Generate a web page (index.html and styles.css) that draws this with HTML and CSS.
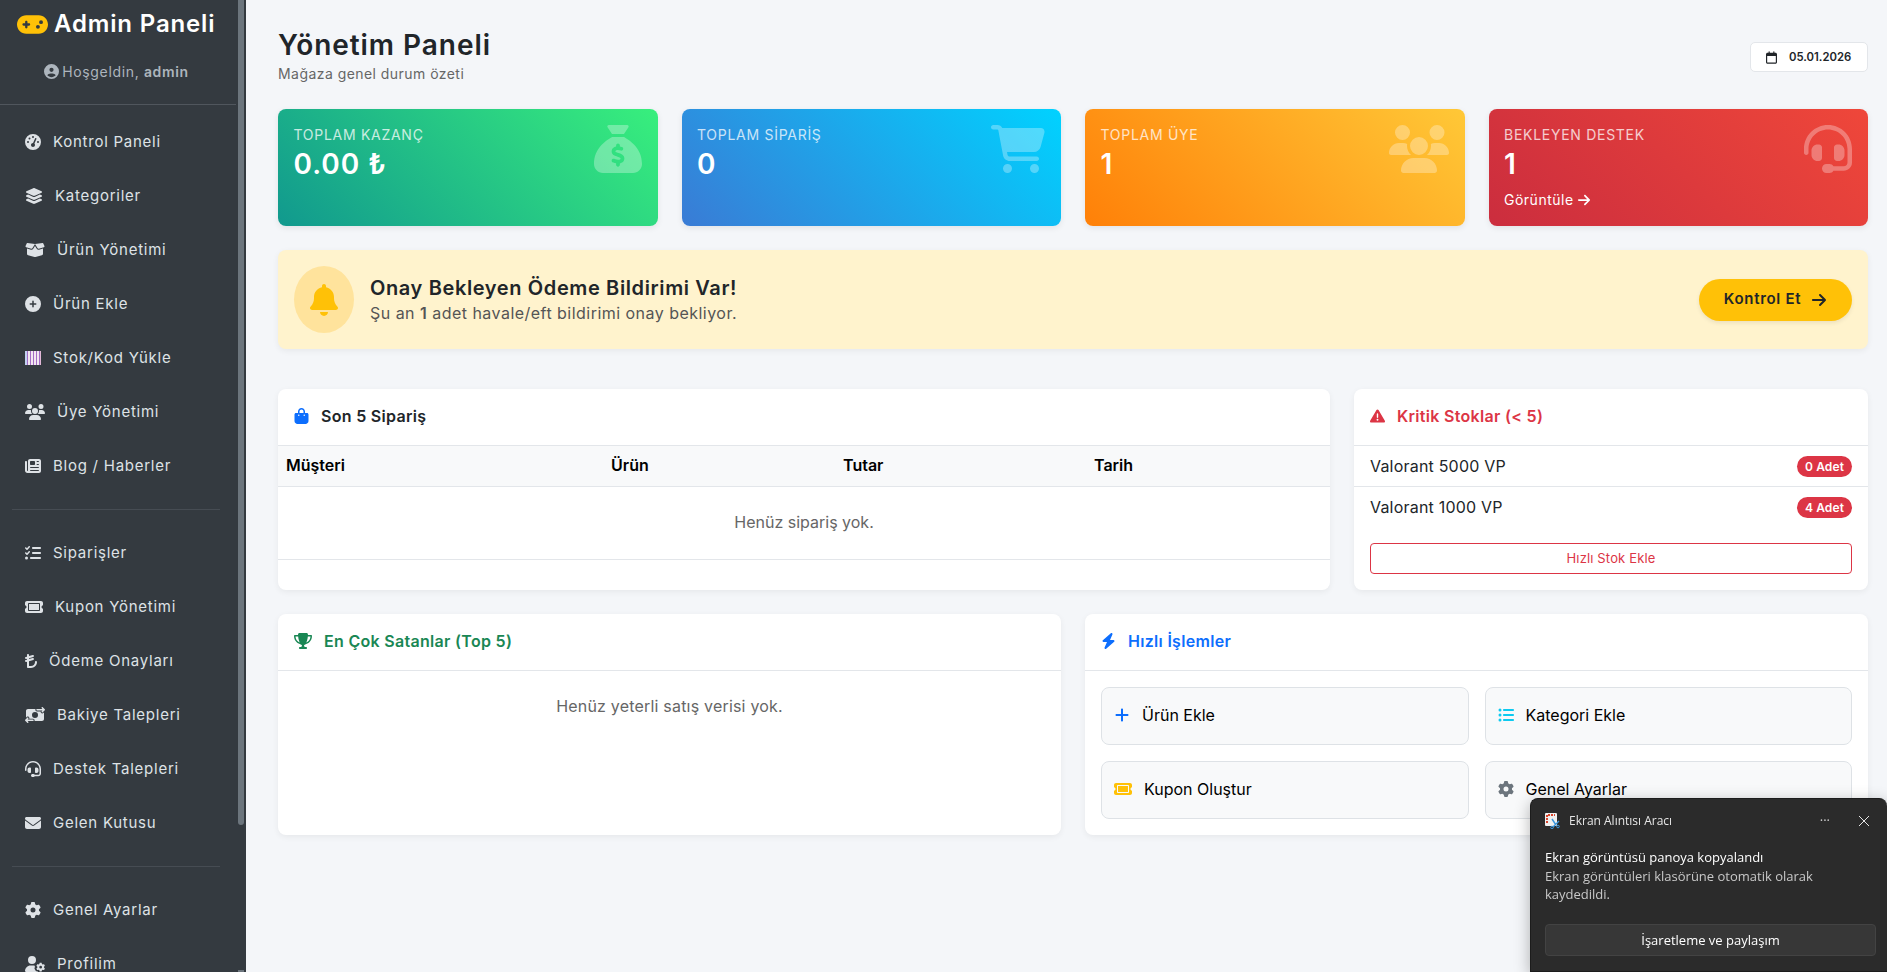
FILE: index.html
```html
<!DOCTYPE html>
<html lang="tr">
<head>
	<meta charset="UTF-8">
	<title>Yönetim Paneli</title>
	<link rel="stylesheet" href="styles.css">
</head>
<body>

	<!-- icons -->
	<svg class="sprite" xmlns="http://www.w3.org/2000/svg">
		<symbol id="i-gamepad" viewBox="0 0 640 512"><path d="M192 64C86 64 0 150 0 256S86 448 192 448H448c106 0 192-86 192-192s-86-192-192-192H192zM496 168a40 40 0 1 1 0 80 40 40 0 1 1 0-80zM392 304a40 40 0 1 1 80 0 40 40 0 1 1 -80 0zM168 200c0-13.3 10.7-24 24-24s24 10.7 24 24v32h32c13.3 0 24 10.7 24 24s-10.7 24-24 24H216v32c0 13.3-10.7 24-24 24s-24-10.7-24-24V280H136c-13.3 0-24-10.7-24-24s10.7-24 24-24h32V200z"/></symbol>
		<symbol id="i-user-circle" viewBox="0 0 512 512"><path d="M399 384.2C376.9 345.8 335.4 320 288 320H224c-47.4 0-88.9 25.8-111 64.2c35.2 39.2 86.2 63.8 143 63.8s107.8-24.7 143-63.8zM0 256a256 256 0 1 1 512 0A256 256 0 1 1 0 256zm256 16a72 72 0 1 0 0-144 72 72 0 1 0 0 144z"/></symbol>
		<symbol id="i-gauge" viewBox="0 0 512 512"><path d="M0 256a256 256 0 1 1 512 0A256 256 0 1 1 0 256zM288 96a32 32 0 1 0 -64 0 32 32 0 1 0 64 0zM256 416c35.3 0 64-28.7 64-64c0-17.4-6.9-33.1-18.1-44.6L366 161.7c5.3-12.1-.2-26.3-12.3-31.6s-26.3 .2-31.6 12.3L257.9 288c-.6 0-1.3 0-1.9 0c-35.3 0-64 28.7-64 64s28.7 64 64 64zM176 144a32 32 0 1 0 -64 0 32 32 0 1 0 64 0zM96 288a32 32 0 1 0 0-64 32 32 0 1 0 0 64zm352-32a32 32 0 1 0 -64 0 32 32 0 1 0 64 0z"/></symbol>
		<symbol id="i-layers" viewBox="0 0 576 512"><path d="M264.5 5.2c14.9-6.9 32.1-6.9 47 0l218.6 101c8.5 3.9 13.9 12.4 13.9 21.8s-5.4 17.9-13.9 21.8l-218.6 101c-14.9 6.9-32.1 6.9-47 0L45.9 149.8C37.4 145.8 32 137.3 32 128s5.4-17.9 13.9-21.8L264.5 5.2zM476.9 209.6l53.2 24.6c8.5 3.9 13.9 12.4 13.9 21.8s-5.4 17.9-13.9 21.8l-218.6 101c-14.9 6.9-32.1 6.9-47 0L45.9 277.8C37.4 273.8 32 265.3 32 256s5.4-17.9 13.9-21.8l53.2-24.6 152 70.2c23.4 10.8 50.4 10.8 73.8 0l152-70.2zm-152 198.2l152-70.2 53.2 24.6c8.5 3.9 13.9 12.4 13.9 21.8s-5.4 17.9-13.9 21.8l-218.6 101c-14.9 6.9-32.1 6.9-47 0L45.9 405.8C37.4 401.8 32 393.3 32 384s5.4-17.9 13.9-21.8l53.2-24.6 152 70.2c23.4 10.8 50.4 10.8 73.8 0z"/></symbol>
		<symbol id="i-box-open" viewBox="0 0 640 512"><path d="M58.9 42.1c3-6.1 9.6-9.6 16.3-8.7L320 64 564.8 33.4c6.7-.8 13.3 2.7 16.3 8.7l41.7 83.4c9 17.9-.6 39.6-19.8 45.1L439.6 217.3c-13.9 4-28.8-1.9-36.2-14.3L320 64 236.6 203c-7.4 12.4-22.3 18.3-36.2 14.3L37.1 170.6c-19.3-5.5-28.8-27.2-19.8-45.1L58.9 42.1zM321.1 128l54.9 91.4c14.9 24.8 44.6 36.6 72.5 28.6L576 211.6v167c0 22-15 41.2-36.4 46.6l-204.1 51c-10.2 2.6-20.9 2.6-31 0l-204.1-51C79 419.7 64 400.5 64 378.5v-167L191.6 248c27.8 8 57.6-3.8 72.5-28.6L318.9 128h2.2z"/></symbol>
		<symbol id="i-circle-plus" viewBox="0 0 512 512"><path d="M256 512A256 256 0 1 0 256 0a256 256 0 1 0 0 512zM232 344V280H168c-13.3 0-24-10.7-24-24s10.7-24 24-24h64V168c0-13.3 10.7-24 24-24s24 10.7 24 24v64h64c13.3 0 24 10.7 24 24s-10.7 24-24 24H280v64c0 13.3-10.7 24-24 24s-24-10.7-24-24z"/></symbol>
		<symbol id="i-barcode" viewBox="0 0 512 512"><rect x="0" y="32" width="512" height="448" fill="#a36cc4"/><rect x="0" y="32" width="64" height="448" fill="#c3d0f2"/><rect x="96" y="32" width="64" height="448" fill="#f2e6f0"/><rect x="192" y="32" width="64" height="448" fill="#f2e6f0"/><rect x="288" y="32" width="64" height="448" fill="#f2e6f0"/><rect x="384" y="32" width="64" height="448" fill="#f2e6f0"/><rect x="480" y="32" width="32" height="448" fill="#e2b8d8"/></symbol>
		<symbol id="i-users" viewBox="0 0 640 512"><path d="M144 0a80 80 0 1 1 0 160A80 80 0 1 1 144 0zM512 0a80 80 0 1 1 0 160A80 80 0 1 1 512 0zM0 298.7C0 239.8 47.8 192 106.7 192h42.7c15.9 0 31 3.5 44.6 9.7c-1.3 7.2-1.9 14.7-1.9 22.3c0 38.2 16.8 72.5 43.3 96c-.2 0-.4 0-.7 0H21.3C9.6 320 0 310.4 0 298.7zM405.3 320c-.2 0-.4 0-.7 0c26.6-23.5 43.3-57.8 43.3-96c0-7.6-.7-15-1.9-22.3c13.6-6.3 28.7-9.7 44.6-9.7h42.7C592.2 192 640 239.8 640 298.7c0 11.8-9.6 21.3-21.3 21.3H405.3zM224 224a96 96 0 1 1 192 0 96 96 0 1 1 -192 0zM128 485.3C128 411.7 187.7 352 261.3 352H378.7C452.3 352 512 411.7 512 485.3c0 14.7-11.9 26.7-26.7 26.7H154.7c-14.7 0-26.7-11.9-26.7-26.7z"/></symbol>
		<symbol id="i-newspaper" viewBox="0 0 512 512"><path d="M96 96c0-35.3 28.7-64 64-64H448c35.3 0 64 28.7 64 64V416c0 35.3-28.7 64-64 64H80c-44.2 0-80-35.8-80-80V128c0-17.7 14.3-32 32-32s32 14.3 32 32V400c0 8.8 7.2 16 16 16s16-7.2 16-16V96zm64 24v80c0 13.3 10.7 24 24 24H296c13.3 0 24-10.7 24-24V120c0-13.3-10.7-24-24-24H184c-13.3 0-24 10.7-24 24zm208-8c0 8.8 7.2 16 16 16h48c8.8 0 16-7.2 16-16s-7.2-16-16-16H384c-8.8 0-16 7.2-16 16zm0 96c0 8.8 7.2 16 16 16h48c8.8 0 16-7.2 16-16s-7.2-16-16-16H384c-8.8 0-16 7.2-16 16zM160 304c0 8.8 7.2 16 16 16H432c8.8 0 16-7.2 16-16s-7.2-16-16-16H176c-8.8 0-16 7.2-16 16zm0 96c0 8.8 7.2 16 16 16H432c8.8 0 16-7.2 16-16s-7.2-16-16-16H176c-8.8 0-16 7.2-16 16z"/></symbol>
		<symbol id="i-list-check" viewBox="0 0 512 512"><path d="M152.1 38.2c9.9 8.9 10.7 24 1.8 33.9l-72 80c-4.4 4.9-10.6 7.8-17.2 7.9s-12.9-2.4-17.6-7L7 113C-2.3 103.6-2.3 88.4 7 79s24.6-9.4 33.9 0l22.1 22.1 55.1-61.2c8.9-9.9 24-10.7 33.9-1.8zm0 160c9.9 8.9 10.7 24 1.8 33.9l-72 80c-4.4 4.9-10.6 7.8-17.2 7.9s-12.9-2.4-17.6-7L7 273c-9.4-9.4-9.4-24.6 0-33.9s24.6-9.4 33.9 0l22.1 22.1 55.1-61.2c8.9-9.9 24-10.7 33.9-1.8zM224 96c0-17.7 14.3-32 32-32H480c17.7 0 32 14.3 32 32s-14.3 32-32 32H256c-17.7 0-32-14.3-32-32zm0 160c0-17.7 14.3-32 32-32H480c17.7 0 32 14.3 32 32s-14.3 32-32 32H256c-17.7 0-32-14.3-32-32zM160 416c0-17.7 14.3-32 32-32H480c17.7 0 32 14.3 32 32s-14.3 32-32 32H192c-17.7 0-32-14.3-32-32zM48 368a48 48 0 1 1 0 96 48 48 0 1 1 0-96z"/></symbol>
		<symbol id="i-ticket" viewBox="0 0 576 512"><path fill-rule="evenodd" d="M64 64C28.7 64 0 92.7 0 128v64c0 8.8 7.4 15.7 15.7 18.6C34.5 217.1 48 235 48 256s-13.5 38.9-32.3 45.4C7.4 304.3 0 311.2 0 320v64c0 35.3 28.7 64 64 64H512c35.3 0 64-28.7 64-64V320c0-8.8-7.4-15.7-15.7-18.6C541.5 294.9 528 277 528 256s13.5-38.9 32.3-45.4c8.3-2.9 15.7-9.8 15.7-18.6V128c0-35.3-28.7-64-64-64H64zM96 160c0-17.7 14.3-32 32-32H448c17.7 0 32 14.3 32 32V352c0 17.7-14.3 32-32 32H128c-17.7 0-32-14.3-32-32V160zM128 160V352H448V160H128z"/></symbol>
		<symbol id="i-lira" viewBox="0 0 384 512"><path d="M96 32c17.7 0 32 14.3 32 32V99.3L247.2 65.2c17-4.9 34.7 5 39.6 22s-5 34.7-22 39.6L128 165.9v29.5l119.2-34.1c17-4.9 34.7 5 39.6 22s-5 34.7-22 39.6L128 261.9V416h63.8c68.2 0 124.4-53.5 127.8-121.6l.4-8c.9-17.7 15.9-31.2 33.6-30.4s31.2 15.9 30.4 33.6l-.4 8C378.5 399.8 294.1 480 191.8 480H96c-17.7 0-32-14.3-32-32V280.2l-23.2 6.6c-17 4.9-34.7-5-39.6-22s5-34.7 22-39.6L64 213.6V184.1l-23.2 6.6c-17 4.9-34.7-5-39.6-22s5-34.7 22-39.6L64 117.6V64c0-17.7 14.3-32 32-32z"/></symbol>
		<symbol id="i-money" viewBox="0 0 640 512"><path fill-rule="evenodd" d="M535 41c-9.4-9.4-9.4-24.6 0-33.9s24.6-9.4 33.9 0l64 64c4.5 4.5 7 10.6 7 17s-2.5 12.5-7 17l-64 64c-9.4 9.4-24.6 9.4-33.9 0s-9.4-24.6 0-33.9l23-23L384 112c-13.3 0-24-10.7-24-24s10.7-24 24-24l174.1 0L535 41zM105 377l-23 23L256 400c13.3 0 24 10.7 24 24s-10.7 24-24 24L81.9 448l23 23c9.4 9.4 9.4 24.6 0 33.9s-24.6 9.4-33.9 0L7 441c-4.5-4.5-7-10.6-7-17s2.5-12.5 7-17l64-64c9.4-9.4 24.6-9.4 33.9 0s9.4 24.6 0 33.9zM96 64H337.9c-3.7 7.2-5.9 15.3-5.9 24c0 28.7 23.3 52 52 52l117.4 0c-4 17 .6 35.5 13.8 48.8c20.3 20.3 53.2 20.3 73.5 0L608 169.5V384c0 35.3-28.7 64-64 64H302.1c3.7-7.2 5.9-15.3 5.9-24c0-28.7-23.3-52-52-52l-117.4 0c4-17-.6-35.5-13.8-48.8c-20.3-20.3-53.2-20.3-73.5 0L32 342.5V128c0-35.3 28.7-64 64-64zM320 352a96 96 0 1 0 0-192 96 96 0 1 0 0 192z"/></symbol>
		<symbol id="i-headset" viewBox="0 0 512 512"><path d="M256 48C141.1 48 48 141.1 48 256v40c0 13.3-10.7 24-24 24s-24-10.7-24-24V256C0 114.6 114.6 0 256 0S512 114.6 512 256V400.1c0 48.6-39.4 88-88.1 88L313.6 488c-8.3 14.3-23.8 24-41.6 24H240c-26.5 0-48-21.5-48-48s21.5-48 48-48h32c17.8 0 33.3 9.7 41.6 24l110.4 .1c22.1 0 40-17.9 40-40V256c0-114.9-93.1-208-208-208zM144 208h16c17.7 0 32 14.3 32 32V352c0 17.7-14.3 32-32 32H144c-35.3 0-64-28.7-64-64V272c0-35.3 28.7-64 64-64zm224 0c35.3 0 64 28.7 64 64v48c0 35.3-28.7 64-64 64H352c-17.7 0-32-14.3-32-32V240c0-17.7 14.3-32 32-32h16z"/></symbol>
		<symbol id="i-envelope" viewBox="0 0 512 512"><path d="M48 64C21.5 64 0 85.5 0 112c0 15.1 7.1 29.3 19.2 38.4L236.8 313.6c11.4 8.5 27 8.5 38.4 0L492.8 150.4c12.1-9.1 19.2-23.3 19.2-38.4c0-26.5-21.5-48-48-48H48zM0 176V384c0 35.3 28.7 64 64 64H448c35.3 0 64-28.7 64-64V176L294.4 339.2c-22.8 17.1-54 17.1-76.8 0L0 176z"/></symbol>
		<symbol id="i-gear" viewBox="0 0 512 512"><path id="gear-path" d="M495.9 166.6c3.2 8.7 .5 18.4-6.4 24.6l-43.3 39.4c1.1 8.3 1.7 16.8 1.7 25.4s-.6 17.1-1.7 25.4l43.3 39.4c6.9 6.2 9.6 15.9 6.4 24.6c-4.4 11.9-9.7 23.3-15.8 34.3l-4.7 8.1c-6.6 11-14 21.4-22.1 31.2c-5.9 7.2-15.7 9.6-24.5 6.8l-55.7-17.7c-13.4 10.3-28.2 18.9-44 25.4l-12.5 57.1c-2 9.1-9 16.3-18.2 17.8c-13.8 2.3-28 3.5-42.5 3.5s-28.7-1.2-42.5-3.5c-9.2-1.5-16.2-8.7-18.2-17.8l-12.5-57.1c-15.8-6.5-30.6-15.1-44-25.4L83.1 425.9c-8.8 2.8-18.6 .3-24.5-6.8c-8.1-9.8-15.5-20.2-22.1-31.2l-4.7-8.1c-6.1-11-11.4-22.4-15.8-34.3c-3.2-8.7-.5-18.4 6.4-24.6l43.3-39.4C64.6 273.1 64 264.6 64 256s.6-17.1 1.7-25.4L22.4 191.2c-6.9-6.2-9.6-15.9-6.4-24.6c4.4-11.9 9.7-23.3 15.8-34.3l4.7-8.1c6.6-11 14-21.4 22.1-31.2c5.9-7.2 15.7-9.6 24.5-6.8l55.7 17.7c13.4-10.3 28.2-18.9 44-25.4l12.5-57.1c2-9.1 9-16.3 18.2-17.8C227.3 1.2 241.5 0 256 0s28.7 1.2 42.5 3.5c9.2 1.5 16.2 8.7 18.2 17.8l12.5 57.1c15.8 6.5 30.6 15.1 44 25.4l55.7-17.7c8.8-2.8 18.6-.3 24.5 6.8c8.1 9.8 15.5 20.2 22.1 31.2l4.7 8.1c6.1 11 11.4 22.4 15.8 34.3zM256 336a80 80 0 1 0 0-160 80 80 0 1 0 0 160z"/></symbol>
		<symbol id="i-user-gear" viewBox="0 0 640 512"><path d="M224 0a128 128 0 1 1 0 256A128 128 0 1 1 224 0zM178.3 304h91.4c11.8 0 23.4 1.2 34.5 3.3c-2.1 18.5 7.4 35.6 21.8 44.8c-16.6 10.6-26.7 31.6-20 53.3c4 12.9 9.4 25.5 16.4 37.6s15.2 23.1 24.4 33c15.7 16.9 39.6 18.4 57.2 8.7v.9c0 9.2 2.7 18.5 7.9 26.3H29.7C13.3 512 0 498.7 0 482.3C0 383.8 79.8 304 178.3 304z"/><use href="#gear-path" transform="translate(360 216) scale(.55)"/></symbol>
		<symbol id="i-sack" viewBox="0 0 512 512"><path d="M320 96H192L144.6 24.9C137.5 14.2 145.1 0 157.9 0H354.1c12.8 0 20.4 14.2 13.3 24.9L320 96zM192 128H320c3.8 2.5 8.1 5.3 13 8.4C389.7 172.7 512 250.9 512 416c0 53-43 96-96 96H96c-53 0-96-43-96-96C0 250.9 122.3 172.7 179 136.4l0 0 0 0c4.8-3.1 9.2-5.9 13-8.4zm84 88c0-11-9-20-20-20s-20 9-20 20v14c-7.6 1.7-15.2 4.4-22.2 8.5c-13.9 8.3-25.9 22.8-25.8 43.9c.1 20.3 12 33.1 24.7 40.7c11 6.6 24.7 10.8 35.6 14l1.7 .5c12.6 3.8 21.8 6.8 28 10.7c5.1 3.2 5.8 5.4 5.9 8.2c.1 5-1.8 8-5.9 10.5c-5 3.1-12.9 5-21.4 4.7c-11.1-.4-21.5-3.9-35.1-8.5c-2.3-.8-4.7-1.6-7.2-2.4c-10.5-3.5-21.8 2.2-25.3 12.6s2.2 21.8 12.6 25.3c1.9 .6 4 1.3 6.1 2.1l0 0 0 0c8.3 2.9 17.9 6.2 28.2 8.4V424c0 11 9 20 20 20s20-9 20-20V410.2c8-1.7 16-4.5 23.2-9c14.3-8.9 25.1-24.1 24.8-45c-.3-20.3-11.7-33.4-24.6-41.6c-11.5-7.2-25.9-11.6-37.1-15l0 0-.7-.2c-12.8-3.9-21.9-6.7-28.3-10.5c-5.2-3.1-5.3-4.9-5.3-6.7c0-3.7 1.4-6.5 6.2-9.3c5.4-3.2 13.6-5.1 21.5-5c9.6 .1 20.2 2.2 31.2 5.2c10.7 2.8 21.6-3.5 24.5-14.2s-3.5-21.6-14.2-24.5c-6.5-1.7-13.7-3.4-21.1-4.7V216z"/></symbol>
		<symbol id="i-cart" viewBox="0 0 576 512"><path d="M0 24C0 10.7 10.7 0 24 0H69.5c22 0 41.5 12.8 50.6 32h411c26.3 0 45.5 25 38.6 50.4l-41 152.3c-8.5 31.4-37 53.3-69.5 53.3H170.7l5.4 28.5c2.2 11.3 12.1 19.5 23.6 19.5H488c13.3 0 24 10.7 24 24s-10.7 24-24 24H199.7c-34.6 0-64.3-24.6-70.7-58.5L77.4 54.5c-.7-3.8-4-6.5-7.9-6.5H24C10.7 48 0 37.3 0 24zM128 464a48 48 0 1 1 96 0 48 48 0 1 1 -96 0zm336-48a48 48 0 1 1 0 96 48 48 0 1 1 0-96z"/></symbol>
		<symbol id="i-bell" viewBox="0 0 448 512"><path d="M224 0c-17.7 0-32 14.3-32 32V51.2C119 66 64 130.6 64 208v18.8c0 47-17.3 92.4-48.6 127.6l-7.4 8.3c-8.4 9.4-10.4 22.9-5.3 34.4S19.4 416 32 416H416c12.6 0 24-7.4 29.2-18.9s3.1-25-5.3-34.4l-7.4-8.3C401.3 319.2 384 273.9 384 226.8V208c0-77.4-55-142-128-156.8V32c0-17.7-14.3-32-32-32zm45.3 493.3c12-12 18.7-28.3 18.7-45.3H224 160c0 17 6.7 33.3 18.7 45.3s28.3 18.7 45.3 18.7s33.3-6.7 45.3-18.7z"/></symbol>
		<symbol id="i-arrow" viewBox="0 0 448 512"><path d="M438.6 278.6c12.5-12.5 12.5-32.8 0-45.3l-160-160c-12.5-12.5-32.8-12.5-45.3 0s-12.5 32.8 0 45.3L338.8 224 32 224c-17.7 0-32 14.3-32 32s14.3 32 32 32l306.7 0L233.4 393.4c-12.5 12.5-12.5 32.8 0 45.3s32.8 12.5 45.3 0l160-160z"/></symbol>
		<symbol id="i-calendar" viewBox="0 0 448 512"><path d="M152 24c0-13.3-10.7-24-24-24s-24 10.7-24 24V64H64C28.7 64 0 92.7 0 128v16 48V448c0 35.3 28.7 64 64 64H384c35.3 0 64-28.7 64-64V192 144 128c0-35.3-28.7-64-64-64H344V24c0-13.3-10.7-24-24-24s-24 10.7-24 24V64H152V24zM48 192H400V448c0 8.8-7.2 16-16 16H64c-8.8 0-16-7.2-16-16V192z"/></symbol>
		<symbol id="i-bag" viewBox="0 0 448 512"><path d="M160 112c0-35.3 28.7-64 64-64s64 28.7 64 64v48H160V112zm-48 48H48c-26.5 0-48 21.5-48 48V416c0 53 43 96 96 96H352c53 0 96-43 96-96V208c0-26.5-21.5-48-48-48H336V112C336 50.1 285.9 0 224 0S112 50.1 112 112v48zm24 48a24 24 0 1 1 0 48 24 24 0 1 1 0-48zm152 24a24 24 0 1 1 48 0 24 24 0 1 1 -48 0z"/></symbol>
		<symbol id="i-trophy" viewBox="0 0 576 512"><path d="M400 0H176c-26.5 0-48.1 21.8-47.1 48.2c.2 5.3 .4 10.6 .7 15.8H24C10.7 64 0 74.7 0 88c0 92.6 33.5 157 78.5 200.7c44.3 43.1 98.3 64.8 138.1 75.8c23.4 6.5 39.4 26 39.4 45.6c0 20.9-17 37.9-37.9 37.9H192c-17.7 0-32 14.3-32 32s14.3 32 32 32H384c17.7 0 32-14.3 32-32s-14.3-32-32-32H357.9C337 448 320 431 320 410.1c0-19.6 15.9-39.2 39.4-45.6c39.9-11 93.9-32.7 138.2-75.8C542.5 245 576 180.6 576 88c0-13.3-10.7-24-24-24H446.4c.3-5.2 .5-10.4 .7-15.8C448.1 21.8 426.5 0 400 0zM48.9 112h84.4c9.1 90.1 29.2 150.3 51.9 190.6c-24.9-11-50.8-26.5-73.2-48.3c-32-31.1-58-76-63-142.3zM464.1 254.3c-22.4 21.8-48.3 37.3-73.2 48.3c22.7-40.3 42.8-100.5 51.9-190.6h84.4c-5.1 66.3-31.1 111.2-63 142.3z"/></symbol>
		<symbol id="i-warning" viewBox="0 0 512 512"><path d="M256 32c14.2 0 27.3 7.5 34.5 19.8l216 368c7.3 12.4 7.3 27.7 .2 40.1S486.3 480 472 480H40c-14.3 0-27.6-7.7-34.7-20.1s-7-27.8 .2-40.1l216-368C228.7 39.5 241.8 32 256 32zm0 128c-13.3 0-24 10.7-24 24V296c0 13.3 10.7 24 24 24s24-10.7 24-24V184c0-13.3-10.7-24-24-24zm32 224a32 32 0 1 0 -64 0 32 32 0 1 0 64 0z"/></symbol>
		<symbol id="i-bolt" viewBox="0 0 448 512"><path d="M349.4 44.6c5.9-13.7 1.5-29.7-10.6-38.5s-28.6-8-39.9 1.8l-256 224c-10 8.8-13.6 22.9-8.9 35.3S50.7 288 64 288H175.5L98.6 467.4c-5.9 13.7-1.5 29.7 10.6 38.5s28.6 8 39.9-1.8l256-224c10-8.8 13.6-22.9 8.9-35.3s-16.6-20.7-30-20.7H272.5L349.4 44.6z"/></symbol>
		<symbol id="i-plus" viewBox="0 0 448 512"><path d="M256 80c0-17.7-14.3-32-32-32s-32 14.3-32 32V224H48c-17.7 0-32 14.3-32 32s14.3 32 32 32H192V432c0 17.7 14.3 32 32 32s32-14.3 32-32V288H400c17.7 0 32-14.3 32-32s-14.3-32-32-32H256V80z"/></symbol>
		<symbol id="i-list" viewBox="0 0 512 512"><path d="M64 144a48 48 0 1 0 0-96 48 48 0 1 0 0 96zM192 64c-17.7 0-32 14.3-32 32s14.3 32 32 32H480c17.7 0 32-14.3 32-32s-14.3-32-32-32H192zm0 160c-17.7 0-32 14.3-32 32s14.3 32 32 32H480c17.7 0 32-14.3 32-32s-14.3-32-32-32H192zm0 160c-17.7 0-32 14.3-32 32s14.3 32 32 32H480c17.7 0 32-14.3 32-32s-14.3-32-32-32H192zM64 464a48 48 0 1 0 0-96 48 48 0 1 0 0 96zm48-208a48 48 0 1 0 -96 0 48 48 0 1 0 96 0z"/></symbol>
	</svg>

	<div class="app">

		<!-- sidebar -->
		<div class="sidebar">
			<div class="brand">
				<div class="brand-name"><svg class="brand-icon"><use href="#i-gamepad"/></svg>Admin Paneli</div>
				<div class="brand-user"><svg class="ic"><use href="#i-user-circle"/></svg><span>Hoşgeldin, <b>admin</b></span></div>
			</div>

			<ul class="side-menu">
				<li><a href="#"><svg class="ic w16"><use href="#i-gauge"/></svg>Kontrol Paneli</a></li>
				<li><a href="#"><svg class="ic w18"><use href="#i-layers"/></svg>Kategoriler</a></li>
				<li><a href="#"><svg class="ic w20"><use href="#i-box-open"/></svg>Ürün Yönetimi</a></li>
				<li><a href="#"><svg class="ic w16"><use href="#i-circle-plus"/></svg>Ürün Ekle</a></li>
				<li><a href="#"><svg class="ic w16"><use href="#i-barcode"/></svg>Stok/Kod Yükle</a></li>
				<li><a href="#"><svg class="ic w20"><use href="#i-users"/></svg>Üye Yönetimi</a></li>
				<li><a href="#"><svg class="ic w16"><use href="#i-newspaper"/></svg>Blog / Haberler</a></li>
			</ul>
			<hr class="side-line">
			<ul class="side-menu">
				<li><a href="#"><svg class="ic w16"><use href="#i-list-check"/></svg>Siparişler</a></li>
				<li><a href="#"><svg class="ic w18"><use href="#i-ticket"/></svg>Kupon Yönetimi</a></li>
				<li><a href="#"><svg class="ic w12"><use href="#i-lira"/></svg>Ödeme Onayları</a></li>
				<li><a href="#"><svg class="ic w20"><use href="#i-money"/></svg>Bakiye Talepleri</a></li>
				<li><a href="#"><svg class="ic w16"><use href="#i-headset"/></svg>Destek Talepleri</a></li>
				<li><a href="#"><svg class="ic w16"><use href="#i-envelope"/></svg>Gelen Kutusu</a></li>
			</ul>
			<hr class="side-line">
			<ul class="side-menu">
				<li><a href="#"><svg class="ic w16"><use href="#i-gear"/></svg>Genel Ayarlar</a></li>
				<li><a href="#"><svg class="ic w20"><use href="#i-user-gear"/></svg>Profilim</a></li>
			</ul>

			<div class="side-thumb"></div>
			<div class="side-arrow"></div>
		</div>

		<!-- content -->
		<div class="main">
			<div class="page-head">
				<div>
					<h1>Yönetim Paneli</h1>
					<p>Mağaza genel durum özeti</p>
				</div>
				<div class="date-box"><svg class="ic"><use href="#i-calendar"/></svg>05.01.2026</div>
			</div>

			<div class="grid">
				<div class="stat stat-green">
					<div>
						<div class="stat-label">TOPLAM KAZANÇ</div>
						<div class="stat-value">0.00 ₺</div>
					</div>
					<svg class="stat-icon sack"><use href="#i-sack"/></svg>
				</div>
				<div class="stat stat-blue">
					<div>
						<div class="stat-label">TOPLAM SİPARİŞ</div>
						<div class="stat-value">0</div>
					</div>
					<svg class="stat-icon cart"><use href="#i-cart"/></svg>
				</div>
				<div class="stat stat-orange">
					<div>
						<div class="stat-label">TOPLAM ÜYE</div>
						<div class="stat-value">1</div>
					</div>
					<svg class="stat-icon users"><use href="#i-users"/></svg>
				</div>
				<div class="stat stat-red">
					<div>
						<div class="stat-label">BEKLEYEN DESTEK</div>
						<div class="stat-value">1</div>
						<a href="#" class="stat-link">Görüntüle <svg class="ic"><use href="#i-arrow"/></svg></a>
					</div>
					<svg class="stat-icon sack"><use href="#i-headset"/></svg>
				</div>
			</div>

			<div class="notice">
				<div class="notice-bell"><svg><use href="#i-bell"/></svg></div>
				<div class="notice-text">
					<h2>Onay Bekleyen Ödeme Bildirimi Var!</h2>
					<p>Şu an <b>1</b> adet havale/eft bildirimi onay bekliyor.</p>
				</div>
				<a href="#" class="notice-btn">Kontrol Et <svg class="ic"><use href="#i-arrow"/></svg></a>
			</div>

			<div class="grid grid-panels">
				<div class="panel span-8">
					<div class="panel-head"><svg class="ic blue"><use href="#i-bag"/></svg>Son 5 Sipariş</div>
					<table class="order-table">
						<thead>
							<tr>
								<th class="col-a">Müşteri</th>
								<th class="col-b">Ürün</th>
								<th class="col-c">Tutar</th>
								<th>Tarih</th>
							</tr>
						</thead>
						<tbody>
							<tr><td colspan="4">Henüz sipariş yok.</td></tr>
						</tbody>
					</table>
				</div>

				<div class="panel span-4">
					<div class="panel-head text-red"><svg class="ic"><use href="#i-warning"/></svg>Kritik Stoklar (&lt; 5)</div>
					<ul class="stock-list">
						<li>Valorant 5000 VP <span class="badge">0 Adet</span></li>
						<li>Valorant 1000 VP <span class="badge">4 Adet</span></li>
					</ul>
					<div class="stock-foot"><a href="#" class="btn-outline">Hızlı Stok Ekle</a></div>
				</div>

				<div class="panel span-6">
					<div class="panel-head text-green"><svg class="ic wide"><use href="#i-trophy"/></svg>En Çok Satanlar (Top 5)</div>
					<div class="panel-empty">Henüz yeterli satış verisi yok.</div>
				</div>

				<div class="panel span-6">
					<div class="panel-head text-blue"><svg class="ic"><use href="#i-bolt"/></svg>Hızlı İşlemler</div>
					<div class="quick-grid">
						<a href="#" class="quick-btn"><svg class="ic blue"><use href="#i-plus"/></svg>Ürün Ekle</a>
						<a href="#" class="quick-btn"><svg class="ic cyan"><use href="#i-list"/></svg>Kategori Ekle</a>
						<a href="#" class="quick-btn"><svg class="ic yellow wide"><use href="#i-ticket"/></svg>Kupon Oluştur</a>
						<a href="#" class="quick-btn"><svg class="ic gray"><use href="#i-gear"/></svg>Genel Ayarlar</a>
					</div>
				</div>
			</div>
		</div>
	</div>

	<!-- windows notification -->
	<div class="toast">
		<div class="toast-head">
			<svg class="toast-logo" viewBox="0 0 16 16">
				<rect x="0" y="0" width="12" height="13" rx="1" fill="#f0f0f0"/>
				<path d="M2 10V2h8" stroke="#d9442b" stroke-width="2" stroke-dasharray="2 1" fill="none"/>
				<path d="M7 6l4 6M14 8l-6 6" stroke="#3a96dd" stroke-width="1.4" fill="none"/>
				<circle cx="7" cy="14.5" r="1.3" fill="none" stroke="#3a96dd"/>
				<circle cx="13" cy="13.5" r="1.3" fill="none" stroke="#3a96dd"/>
			</svg>
			<span class="toast-app">Ekran Alıntısı Aracı</span>
			<span class="toast-more">···</span>
			<svg class="toast-close" viewBox="0 0 10 10"><path d="M0 0l10 10M10 0L0 10" stroke="#e6e6e6" fill="none"/></svg>
		</div>
		<div class="toast-title">Ekran görüntüsü panoya kopyalandı</div>
		<div class="toast-text">Ekran görüntüleri klasörüne otomatik olarak kaydedildi.</div>
		<div class="toast-btn">İşaretleme ve paylaşım</div>
	</div>

</body>
</html>
```
FILE: styles.css
```css
body, div, h1, h2, p, ul, li, a, table, th, td, hr{ margin: 0; padding: 0; }
ul, li{ list-style: none; }
a{ text-decoration: none; color: inherit; }
b{ font-weight: 600; }

body{
	font-family: Inter, "Noto Sans", sans-serif;
	font-size: 15px;
	line-height: 1.5;
	color: #212529;
	background: #f4f6f9;
	overflow: hidden;
}

.sprite{ display: none; }
.ic{ width: 16px; height: 16px; fill: currentColor; flex: none; }
.ic.w12{ width: 12px; }
.ic.w16{ width: 16px; }
.ic.w18{ width: 18px; }
.ic.w20{ width: 20px; }
.ic.wide{ width: 18px; }
.blue{ color: #0d6efd; }
.cyan{ color: #0dcaf0; }
.yellow{ color: #ffc107; }
.gray{ color: #6c757d; }

.app{ display: flex; height: 972px; }

/* sidebar */
.sidebar{
	position: relative;
	flex: none;
	width: 246px;
	height: 972px;
	overflow: hidden;
	background: #343a40;
	color: #dee2e6;
}
.brand{
	width: 236px;
	height: 98px;
	padding-top: 6px;
	border-bottom: 1px solid #50565d;
}
.brand-name{
	display: flex;
	align-items: center;
	padding-left: 17px;
	gap: 6px;
	height: 36px;
	font-size: 24px;
	font-weight: 600;
	letter-spacing: .85px;
	color: #fff;
}
.brand-icon{ width: 31px; height: 25px; fill: #ffc107; flex: none; }
.brand-user{
	display: flex;
	align-items: center;
	justify-content: center;
	gap: 3px;
	margin-top: 19px;
	padding-right: 3px;
	font-size: 14px;
	letter-spacing: .65px;
	color: #adb5bd;
}
.brand-user .ic{ width: 15px; height: 15px; }
.side-menu{ padding-top: 9px; }
.side-menu a{
	display: flex;
	align-items: center;
	gap: 12px;
	height: 54px;
	box-sizing: border-box;
	padding: 2px 0 0 25px;
	letter-spacing: .75px;
}
.side-line{
	width: 208px;
	height: 1px;
	border: 0;
	margin: 17px 0 6px 12px;
	background: #464c53;
}
.side-thumb{
	position: absolute;
	top: 0;
	left: 238px;
	width: 6px;
	height: 825px;
	border-radius: 0 0 3px 3px;
	background: #6c757d;
}
.side-arrow{
	position: absolute;
	bottom: 0;
	left: 238px;
	width: 6px;
	height: 2px;
	background: #6c757d;
}

/* content */
.main{
	flex: 1;
	min-width: 0;
	padding: 24px 19px 0 32px;
}
.page-head{
	display: flex;
	justify-content: space-between;
	align-items: flex-start;
	height: 85px;
}
.page-head h1{
	padding-top: 4px;
	font-size: 28px;
	line-height: 35px;
	font-weight: 600;
	letter-spacing: .95px;
}
.page-head p{
	font-size: 14px;
	line-height: 21px;
	letter-spacing: .45px;
	color: #666;
}
.date-box{
	display: flex;
	align-items: center;
	gap: 12px;
	width: 118px;
	height: 30px;
	box-sizing: border-box;
	margin-top: 18px;
	padding: 0 0 0 15px;
	border: 1px solid #e3e6ea;
	border-radius: 5px;
	background: #fff;
	font-size: 11.3px;
	font-weight: 600;
}
.date-box .ic{ width: 11px; height: 13px; }

.grid{
	display: grid;
	grid-template-columns: repeat(12, 1fr);
	gap: 24px;
}

.stat{
	grid-column: span 3;
	display: flex;
	justify-content: space-between;
	height: 117px;
	box-sizing: border-box;
	padding: 16px;
	border-radius: 8px;
	color: #fff;
	box-shadow: 0 2px 6px rgba(0,0,0,.08);
}
.stat-green{ background: linear-gradient(45deg, #11998e, #38ef7d); }
.stat-blue{ background: linear-gradient(45deg, #3a7bd5, #00d2ff); }
.stat-orange{ background: linear-gradient(45deg, #ff8008, #ffc837); }
.stat-red{ background: linear-gradient(45deg, #cb2d3e, #ef473a); }
.stat-label{
	font-size: 14px;
	line-height: 21px;
	margin-top: -1px;
	margin-left: -.5px;
	letter-spacing: .72px;
	opacity: .75;
}
.stat-value{
	font-size: 28px;
	line-height: 36px;
	margin-top: 1px;
	margin-left: -.5px;
	font-weight: 600;
	letter-spacing: 1px;
}
.stat-link{
	display: flex;
	align-items: center;
	gap: 3px;
	margin-top: 8px;
	margin-left: -.5px;
	font-size: 14px;
	line-height: 20px;
	letter-spacing: .5px;
}
.stat-link .ic{ width: 14px; height: 14px; }
.stat-icon{ height: 48px; fill: #fff; opacity: .3; flex: none; }
.stat-icon.sack{ width: 48px; }
.stat-icon.cart{ width: 54px; }
.stat-icon.users{ width: 60px; }

.notice{
	display: flex;
	align-items: center;
	gap: 16px;
	height: 99px;
	box-sizing: border-box;
	margin: 24px 0 40px;
	padding: 16px;
	border-radius: 8px;
	background: #fff3cd;
	box-shadow: 0 2px 6px rgba(0,0,0,.06);
}
.notice-bell{
	display: flex;
	align-items: center;
	justify-content: center;
	flex: none;
	width: 60px;
	height: 67px;
	border-radius: 50%;
	background: #ffe39c;
}
.notice-bell svg{ width: 28px; height: 32px; fill: #ffc107; }
.notice-text{ flex: 1; padding-top: 1px; }
.notice-text h2{ font-size: 20px; line-height: 25px; font-weight: 600; letter-spacing: .62px; }
.notice-text p{ font-size: 16px; line-height: 24px; letter-spacing: .47px; color: #555; }
.notice-btn{
	display: flex;
	align-items: center;
	justify-content: center;
	gap: 10px;
	width: 153px;
	height: 42px;
	border-radius: 21px;
	background: #ffc107;
	font-size: 15px;
	font-weight: 600;
	letter-spacing: .7px;
	box-shadow: 0 2px 4px rgba(0,0,0,.08);
}

.panel{
	border-radius: 8px;
	background: #fff;
	box-shadow: 0 2px 6px rgba(0,0,0,.06);
	overflow: hidden;
}
.span-8{ grid-column: span 8; }
.span-6{ grid-column: span 6; }
.span-4{ grid-column: span 4; }
.panel-head{
	display: flex;
	align-items: center;
	gap: 12px;
	height: 54px;
	padding: 0 16px 2px;
	border-bottom: 1px solid #e3e6ea;
	font-size: 16px;
	font-weight: 600;
	letter-spacing: .3px;
}
.text-red{ color: #dc3545; }
.text-green{ color: #198754; }
.text-blue{ color: #0d6efd; }
.panel-head .ic{ width: 15px; }
.panel-head .ic.wide{ width: 18px; }
.panel-empty{
	padding: 23px 16px 16px;
	font-size: 16px;
	line-height: 24px;
	letter-spacing: .2px;
	text-align: center;
	color: #666;
}

.order-table{
	width: 100%;
	table-layout: fixed;
	border-collapse: collapse;
	margin-bottom: 30px;
	font-size: 16px;
}
.order-table th{
	box-sizing: border-box;
	height: 40px;
	padding: 0 8px 2px;
	text-align: left;
	font-weight: 600;
	color: #000;
	background: #f8f9fa;
	border-bottom: 1px solid #e3e6ea;
}
.order-table td{
	height: 73px;
	padding-bottom: 2px;
	box-sizing: border-box;
	text-align: center;
	color: #666;
	border-bottom: 1px solid #e3e6ea;
}
.col-a{ width: 325px; }
.col-b{ width: 232px; }
.col-c{ width: 251px; }

.stock-list li{
	display: flex;
	justify-content: space-between;
	align-items: center;
	height: 40px;
	box-sizing: content-box;
	padding: 0 16px;
	font-size: 16px;
	letter-spacing: .2px;
	line-height: 22px;
	border-bottom: 1px solid #e3e6ea;
}
.stock-list li:last-child{ border-bottom: 0; }
.badge{
	padding: 0 8px;
	border-radius: 11px;
	background: #dc3545;
	color: #fff;
	font-size: 12px;
	line-height: 21px;
	font-weight: 600;
	letter-spacing: .1px;
}
.stock-foot{ padding: 16px 16px 0; }
.btn-outline{
	display: block;
	height: 31px;
	box-sizing: border-box;
	border: 1px solid #dc3545;
	border-radius: 4px;
	font-size: 13px;
	line-height: 29px;
	letter-spacing: .15px;
	text-align: center;
	color: #dc3545;
}

.quick-grid{
	display: grid;
	grid-template-columns: 1fr 1fr;
	gap: 16px;
	padding: 16px;
}
.quick-btn{
	display: flex;
	align-items: center;
	gap: 12px;
	height: 58px;
	box-sizing: border-box;
	padding: 0 12px 2px;
	border: 1px solid #dee2e6;
	border-radius: 8px;
	background: #f8f9fa;
	font-size: 16px;
	color: #000;
}

/* notification lies over the page */
.toast{
	position: fixed;
	right: 0;
	bottom: 0;
	width: 357px;
	height: 174px;
	box-sizing: border-box;
	padding: 0 11px 0 14px;
	border: 1px solid #1c1c1c;
	border-right: 0;
	border-radius: 8px 8px 0 0;
	background: #2b2b2b;
	color: #fff;
	font-family: "Open Sans", "Noto Sans", sans-serif;
	box-shadow: 0 4px 16px rgba(0,0,0,.3);
}
.toast-head{
	display: flex;
	align-items: center;
	height: 44px;
	font-size: 12px;
}
.toast-logo{ width: 16px; height: 16px; flex: none; }
.toast-app{ margin-left: 8px; flex: 1; color: #e6e6e6; }
.toast-more{ margin-right: 29px; font-size: 13px; color: #ccc; }
.toast-close{ width: 10px; height: 10px; margin-right: 7px; flex: none; }
.toast-title{ margin-top: 5px; font-size: 13px; line-height: 19px; }
.toast-text{ font-size: 13px; line-height: 18px; color: #c8c8c8; }
.toast-btn{
	height: 32px;
	box-sizing: border-box;
	margin-top: 21px;
	border: 1px solid #434343;
	border-radius: 4px;
	background: #373737;
	font-size: 13px;
	line-height: 30px;
	text-align: center;
}
```
